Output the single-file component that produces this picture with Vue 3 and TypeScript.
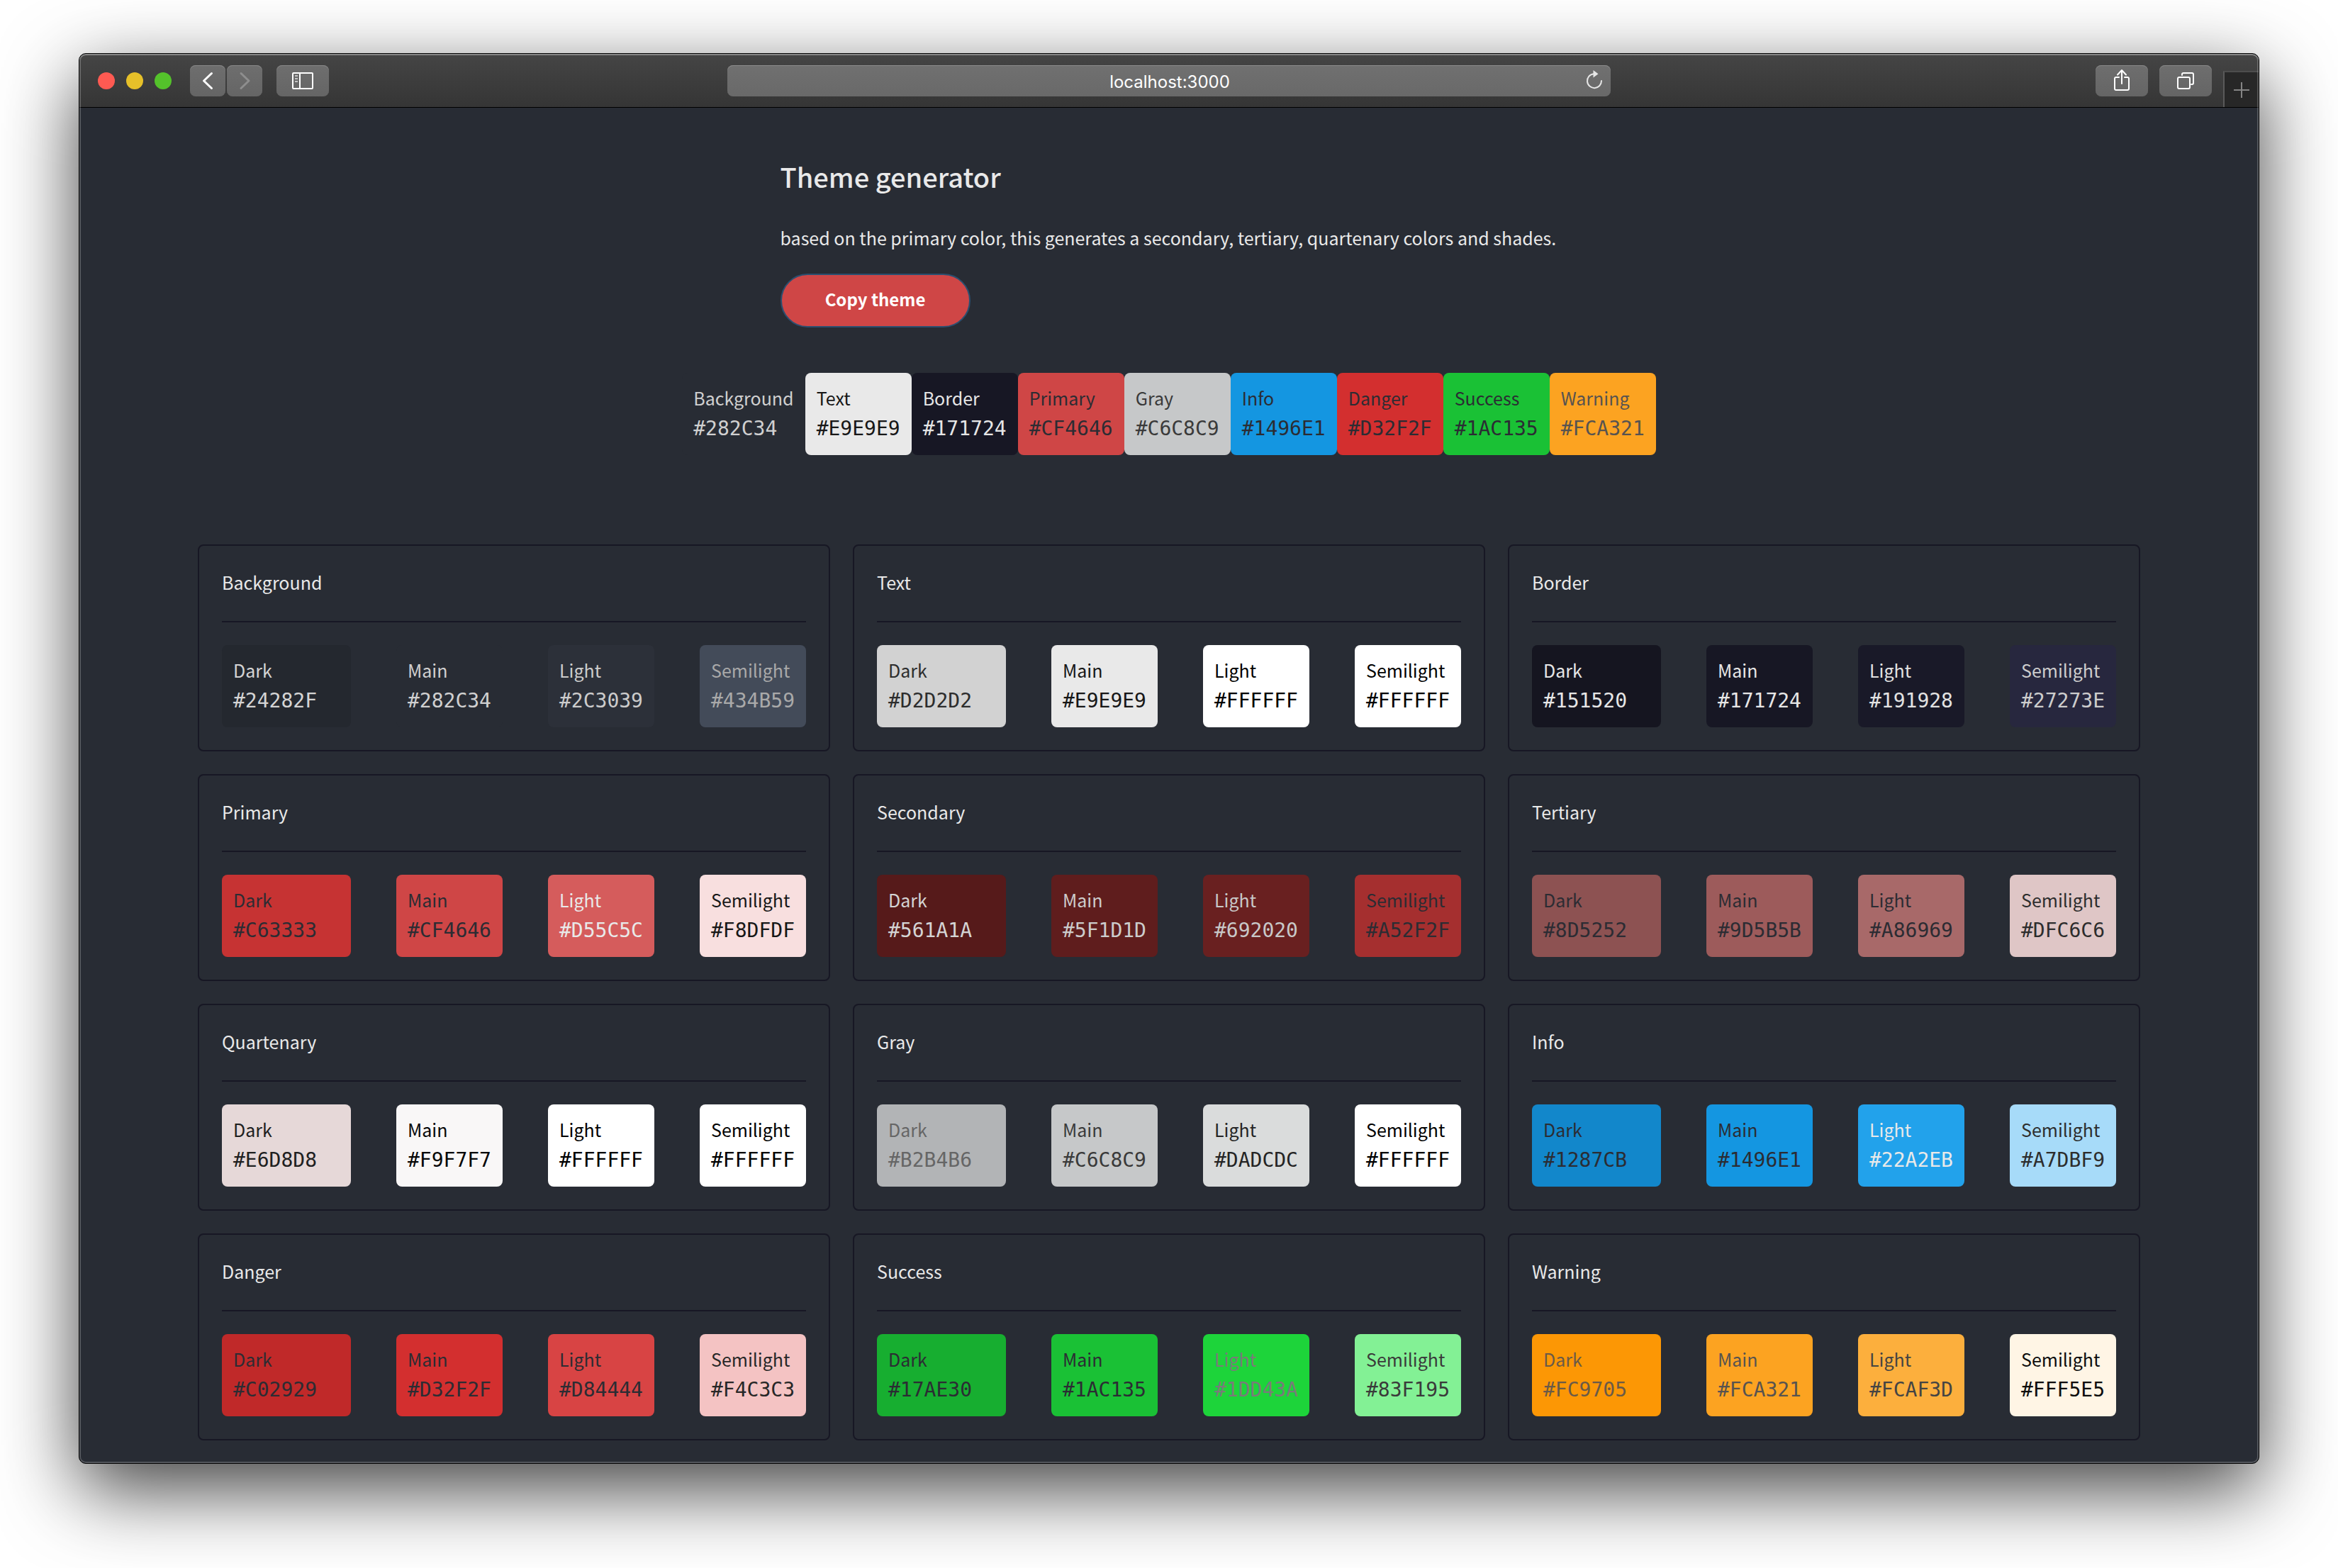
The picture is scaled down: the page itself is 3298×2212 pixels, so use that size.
<script setup lang="ts">
interface Shade {
  name: string
  hex: string
  ink: string
}

interface Palette {
  title: string
  shades: Shade[]
}

const names = ['Dark', 'Main', 'Light', 'Semilight']

function palette(title: string, ...pairs: [string, string][]): Palette {
  return {
    title,
    shades: pairs.map(([hex, ink], i) => ({ name: names[i], hex, ink })),
  }
}

const base: Shade[] = [
  { name: 'Background', hex: '#282C34', ink: '#D0D0D0' },
  { name: 'Text', hex: '#E9E9E9', ink: '#171717' },
  { name: 'Border', hex: '#171724', ink: '#E6E6E6' },
  { name: 'Primary', hex: '#CF4646', ink: '#2C2C33' },
  { name: 'Gray', hex: '#C6C8C9', ink: '#3A3A3A' },
  { name: 'Info', hex: '#1496E1', ink: '#2B2C33' },
  { name: 'Danger', hex: '#D32F2F', ink: '#2C2C33' },
  { name: 'Success', hex: '#1AC135', ink: '#2B2C33' },
  { name: 'Warning', hex: '#FCA321', ink: '#575350' },
]

const palettes: Palette[] = [
  palette('Background', ['#24282F', '#D4D4D4'], ['#282C34', '#D0D0D0'], ['#2C3039', '#CCCCCC'], ['#434B59', '#A9A9A9']),
  palette('Text', ['#D2D2D2', '#2D2D2D'], ['#E9E9E9', '#171717'], ['#FFFFFF', '#000000'], ['#FFFFFF', '#000000']),
  palette('Border', ['#151520', '#E6E6E6'], ['#171724', '#E6E6E6'], ['#191928', '#E2E2E2'], ['#27273E', '#CDCDCD']),
  palette('Primary', ['#C63333', '#2C2C33'], ['#CF4646', '#2C2C33'], ['#D55C5C', '#E9E9E9'], ['#F8DFDF', '#171717']),
  palette('Secondary', ['#561A1A', '#D4D4D4'], ['#5F1D1D', '#CCCCCC'], ['#692020', '#C8C8C8'], ['#A52F2F', '#2C2C33']),
  palette('Tertiary', ['#8D5252', '#2C2C33'], ['#9D5B5B', '#2C2C33'], ['#A86969', '#2C2C33'], ['#DFC6C6', '#2D2D2D']),
  palette('Quartenary', ['#E6D8D8', '#202020'], ['#F9F7F7', '#080808'], ['#FFFFFF', '#000000'], ['#FFFFFF', '#000000']),
  palette('Gray', ['#B2B4B6', '#666666'], ['#C6C8C9', '#3A3A3A'], ['#DADCDC', '#242424'], ['#FFFFFF', '#000000']),
  palette('Info', ['#1287CB', '#2B2C33'], ['#1496E1', '#2B2C33'], ['#22A2EB', '#E9E9E9'], ['#A7DBF9', '#2D2D2D']),
  palette('Danger', ['#C02929', '#2C2C33'], ['#D32F2F', '#2C2C33'], ['#D84444', '#2C2C33'], ['#F4C3C3', '#272727']),
  palette('Success', ['#17AE30', '#2B2C33'], ['#1AC135', '#2B2C33'], ['#1DD43A', '#7A7A7A'], ['#83F195', '#3A3A3A']),
  palette('Warning', ['#FC9705', '#6A5A48'], ['#FCA321', '#575350'], ['#FCAF3D', '#444444'], ['#FFF5E5', '#0D0D0D']),
]
</script>

<template>
  <div class="window">
    <header class="toolbar">
      <div class="side">
        <div class="lights">
          <button class="light close" aria-label="Close"></button>
          <button class="light minimise" aria-label="Minimise"></button>
          <button class="light expand" aria-label="Full screen"></button>
        </div>
        <div class="history">
          <button class="tool" aria-label="Back">
            <svg width="50" height="44" viewBox="0 0 50 44"><path d="M30.500 11.500 19.500 22l11 10.500" /></svg>
          </button>
          <button class="tool off" aria-label="Forward">
            <svg width="50" height="44" viewBox="0 0 50 44"><path d="M20 11.500 31 22 20 32.500" /></svg>
          </button>
        </div>
        <button class="tool wide" aria-label="Show sidebar">
          <svg class="thin" width="74" height="44" viewBox="0 0 74 44">
            <rect x="23" y="11" width="28" height="22" rx="1" />
            <path d="M33 11v22" />
            <path class="faint" d="M26 15h4M26 19h4M26 23h4" />
          </svg>
        </button>
      </div>

      <div class="address">
        <input type="text" value="localhost:3000" aria-label="Address" spellcheck="false" />
        <button class="reload" aria-label="Reload">
          <svg width="30" height="32" viewBox="0 0 30 32">
            <path d="M14 7.200A10 10 0 1 0 25 17" />
            <path class="solid" d="M13.500 2 20.500 7.300 13.500 12.600z" />
          </svg>
        </button>
      </div>

      <div class="side end">
        <button class="tool wide" aria-label="Share">
          <svg class="thin" width="74" height="44" viewBox="0 0 74 44">
            <path d="M33 17h-4q-2 0-2 2v14q0 2 2 2h16q2 0 2-2V19q0-2-2-2h-4" />
            <path d="M37 26V8M31 13.500 37 7l6 6.500" />
          </svg>
        </button>
        <button class="tool wide" aria-label="Show all tabs">
          <svg class="thin" width="74" height="44" viewBox="0 0 74 44">
            <rect x="26" y="17" width="17" height="16" rx="2" />
            <path d="M32 14v-1q0-2 2-2h12q2 0 2 2v12q0 2-2 2h-1" />
          </svg>
        </button>
        <button class="new-tab" aria-label="New tab">
          <svg width="24" height="24" viewBox="0 0 24 24"><path d="M12 1v22M1 12h22" /></svg>
        </button>
      </div>
    </header>

    <main class="page">
      <section class="intro">
        <h1>Theme generator</h1>
        <p>based on the primary color, this generates a secondary, tertiary, quartenary colors and shades.</p>
        <button class="copy">Copy theme</button>
      </section>

      <div class="base">
        <div v-for="shade in base" :key="shade.name" class="swatch" :style="{ background: shade.hex, color: shade.ink }">
          <span>{{ shade.name }}</span>
          <code>{{ shade.hex }}</code>
        </div>
      </div>

      <div class="cards">
        <section v-for="item in palettes" :key="item.title" class="card">
          <h2>{{ item.title }}</h2>
          <div class="shades">
            <div
              v-for="shade in item.shades"
              :key="shade.name"
              class="swatch"
              :style="{ background: shade.hex, color: shade.ink }"
            >
              <span>{{ shade.name }}</span>
              <code>{{ shade.hex }}</code>
            </div>
          </div>
        </section>
      </div>
    </main>
  </div>
</template>

<style>
body {
  margin: 0;
  background: #fff;
}

#app {
  padding: 75px 111px 147px;
}
</style>

<style scoped>
* {
  box-sizing: border-box;
}

button {
  margin: 0;
  padding: 0;
  border: 0;
  font: inherit;
}

svg {
  display: block;
  fill: none;
  stroke: #fff;
  stroke-width: 3;
  stroke-linecap: round;
  stroke-linejoin: round;
}

.window {
  position: relative;
  border: 1px solid #000;
  border-radius: 10px;
  overflow: hidden;
  background: #282c34;
  box-shadow: 0 36px 110px rgba(0, 0, 0, 0.75);
  color: #e9e9e9;
  font-family: "Noto Sans CJK JP", "Noto Sans", sans-serif;
  font-size: 25px;
  line-height: 38px;
}

/* bright inner rim of the window */
.window::after {
  content: "";
  position: absolute;
  inset: 0;
  border-radius: 9px;
  box-shadow: inset 0 0 0 2px rgba(255, 255, 255, 0.2), inset 0 2px 0 rgba(255, 255, 255, 0.2);
  pointer-events: none;
}

.toolbar {
  display: grid;
  grid-template-columns: 1fr minmax(0, 1246px) 1fr;
  height: 76px;
  border-bottom: 1px solid #000;
  background: linear-gradient(#454545, #353535);
}

.side {
  display: flex;
  align-items: flex-start;
  gap: 16px;
  padding: 16px 0 0 26px;
}

.lights {
  display: flex;
  align-items: center;
  gap: 16px;
  height: 44px;
}

.light {
  width: 24px;
  height: 24px;
  border-radius: 50%;
}

.close {
  background: #ff5a52;
}

.minimise {
  background: #e6c029;
}

.expand {
  background: #54c22b;
}

.history {
  display: flex;
  gap: 2px;
  margin: 0 4px 0 10px;
}

.tool {
  width: 50px;
  height: 44px;
  border-radius: 8px;
  background: linear-gradient(#6e6e6e, #656565);
  box-shadow: inset 0 1px 0 #888;
}

.wide {
  width: 74px;
}

.off svg {
  stroke: #8e8e8e;
}

.thin {
  stroke-width: 2;
}

.faint {
  stroke: #c4c4c4;
  stroke-linecap: butt;
}

.address {
  position: relative;
  padding-top: 16px;
}

.address input {
  display: block;
  width: 100%;
  height: 44px;
  padding: 3px 48px 0 50px;
  border: 0;
  border-radius: 8px;
  background: linear-gradient(#707070, #696969);
  box-shadow: inset 0 1px 0 #8c8c8c;
  color: #fff;
  font-family: Inter, sans-serif;
  font-size: 24px;
  text-align: center;
}

.reload {
  position: absolute;
  top: 21px;
  right: 8px;
  background: none;
}

.reload svg {
  stroke: #e6e6e6;
  stroke-width: 2;
}

.reload .solid {
  fill: #e6e6e6;
  stroke: none;
}

.end {
  justify-content: flex-end;
  padding-left: 0;
}

.new-tab {
  display: grid;
  place-items: center;
  width: 50px;
  height: 51px;
  margin-top: 8px;
  border-top: 2px solid #4d4d4d;
  border-left: 2px solid #5a5a5a;
  background: #272727;
}

.new-tab svg {
  stroke: #858585;
  stroke-width: 2;
  stroke-linecap: butt;
}

.page {
  display: flex;
  flex-direction: column;
  align-items: center;
  padding: 73px 32px 32px;
}

h1,
h2,
p {
  margin: 0;
}

h1 {
  font-size: 38px;
  font-weight: 500;
  line-height: 48px;
}

.intro {
  min-width: 1097px;
}

.intro p {
  margin: 43px 0 32px;
}

.copy {
  display: block;
  width: 268px;
  height: 76px;
  padding-bottom: 4px;
  border: 2px solid #2b4f70;
  border-radius: 38px;
  background: #cf4646;
  color: #fff;
  font-size: 24px;
  font-weight: 600;
}

.base {
  display: flex;
  margin: 64px 0 126px;
}

.swatch {
  display: flex;
  flex-direction: column;
  gap: 4px;
  padding: 16px;
  border-radius: 8px;
}

code {
  font-family: "DejaVu Sans Mono", monospace;
  font-size: 28px;
  line-height: 42px;
}

.cards {
  display: grid;
  grid-template-columns: repeat(3, 1fr);
  gap: 32px;
  width: 100%;
  max-width: 2740px;
}

.card {
  padding: 32px;
  border: 2px solid #171724;
  border-radius: 8px;
}

h2 {
  padding-bottom: 36px;
  border-bottom: 2px solid #171724;
  font-size: 25px;
  font-weight: 400;
}

.shades {
  display: flex;
  gap: 64px;
  padding-top: 32px;
}

.shades .swatch:first-child {
  flex: 1;
}
</style>
